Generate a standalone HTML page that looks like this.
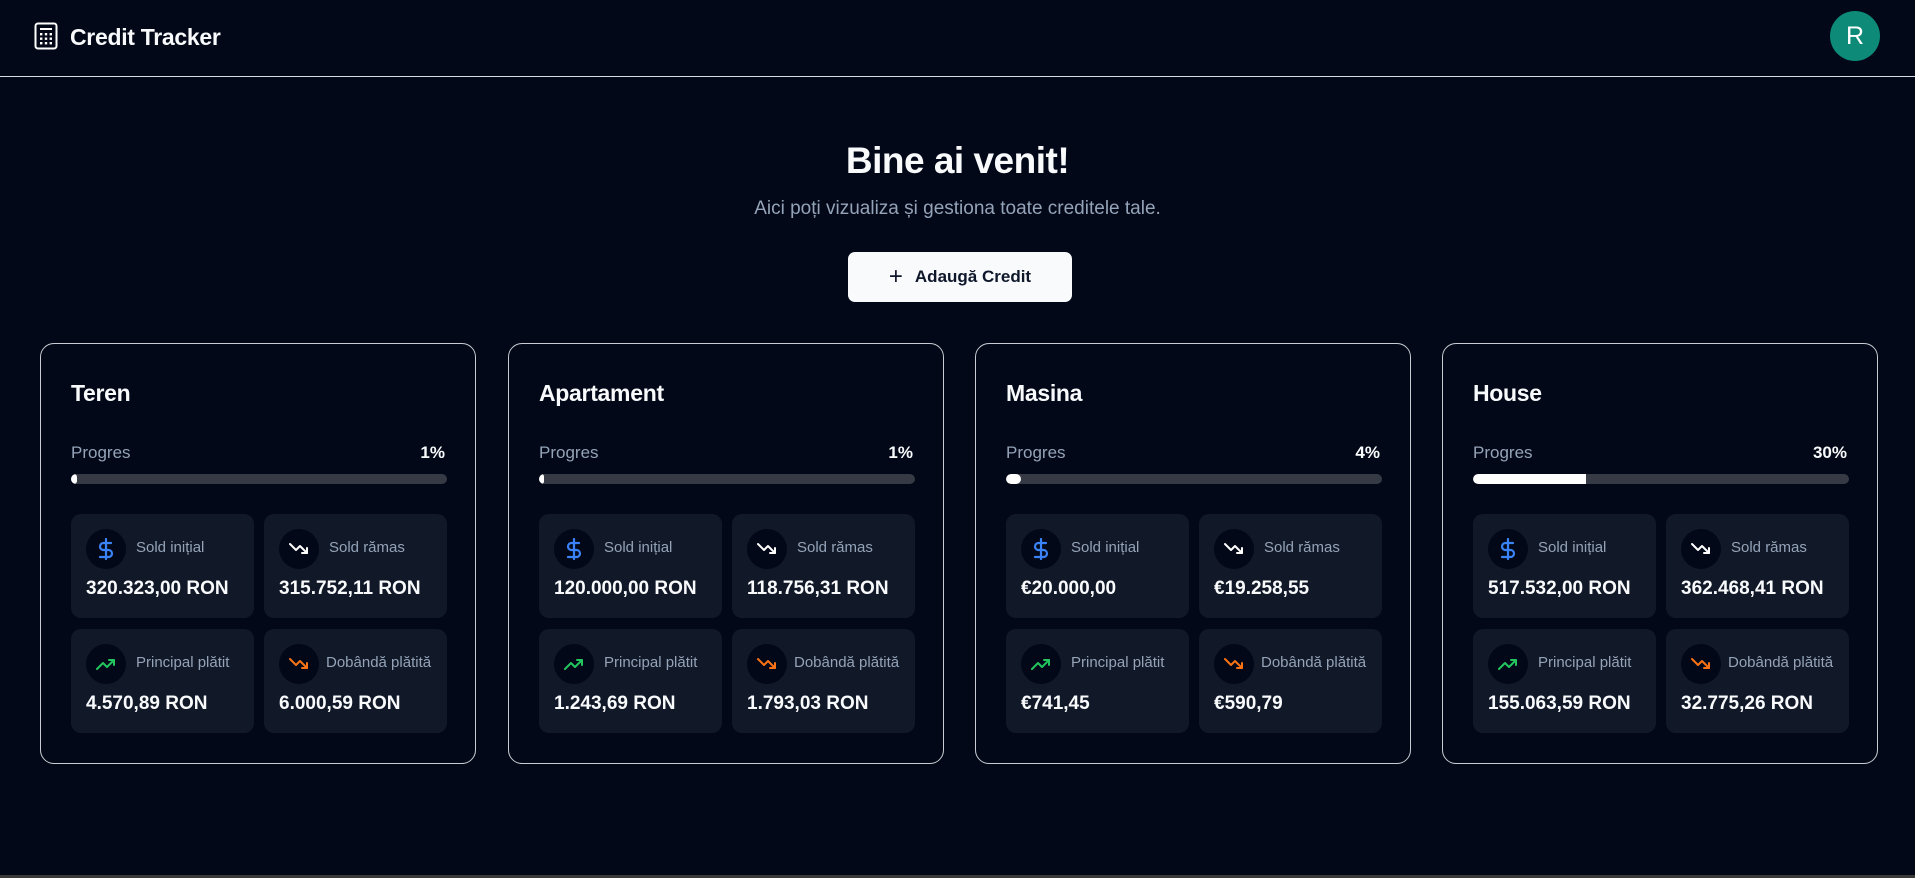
<!DOCTYPE html>
<html><head><meta charset="utf-8"><style>
*{box-sizing:border-box;margin:0;padding:0}
body{width:1915px;height:878px;background:#020817;color:#f8fafc;font-family:"Liberation Sans",sans-serif;position:relative;overflow:hidden}
.hdr{position:absolute;left:0;top:0;width:1915px;height:77px;border-bottom:1px solid #d8dce3}
.logo{position:absolute;left:34px;top:22px}
.brand{position:absolute;left:70px;top:24px;font-size:23px;font-weight:bold;letter-spacing:-0.3px}
.av{position:absolute;left:1830px;top:11px;width:50px;height:50px;border-radius:50%;background:#0d8a78;color:#fff;font-size:25px;text-align:center;line-height:50px}
h1{position:absolute;left:0;width:1915px;top:140px;text-align:center;font-size:37px;font-weight:bold;letter-spacing:-0.5px}
.sub{position:absolute;left:0;width:1915px;top:198px;text-align:center;font-size:19px;color:#94a3b8}
.btn{position:absolute;left:848px;top:252px;width:224px;height:50px;background:#f8fafc;border-radius:7px;color:#0f172a;font-size:17px;font-weight:bold;text-align:center;line-height:50px}
.card{position:absolute;top:343px;width:436px;height:421px;border:1px solid #c9ccd2;border-radius:14px}
.t{position:absolute;left:30px;top:36px;font-size:23px;font-weight:bold;letter-spacing:-0.3px}
.pl{position:absolute;left:30px;top:99px;font-size:17px;color:#94a3b8}
.pp{position:absolute;right:30px;top:99px;font-size:17px;font-weight:bold}
.bar{position:absolute;left:30px;top:130px;width:376px;height:10px;border-radius:5px;background:#363a45;overflow:hidden}
.bar i{display:block;height:100%;background:#fff;border-radius:5px}
.s{position:absolute;width:183px;height:104px;background:#111827;border-radius:10px}
.ic{position:absolute;left:15px;top:15px;width:40px;height:40px;border-radius:50%;background:#020817;display:flex;align-items:center;justify-content:center}
.lb{position:absolute;left:65px;top:25px;font-size:15px;color:#94a3b8;white-space:nowrap}
.v{position:absolute;left:15px;top:64px;font-size:19px;font-weight:bold;white-space:nowrap}
.sb{position:absolute;left:0;top:875px;width:1915px;height:3px;background:#3a3a3a}
</style></head><body>
<div class="hdr">
<svg class="logo" width="24" height="28" viewBox="0 0 24 28" fill="none" stroke="#fff" stroke-width="2"><rect x="1.5" y="1.5" width="21" height="25" rx="2.5"/><line x1="6" y1="7" x2="18" y2="7"/><g fill="#fff" stroke="none"><rect x="6" y="11" width="2.4" height="2.4"/><rect x="10.8" y="11" width="2.4" height="2.4"/><rect x="15.6" y="11" width="2.4" height="2.4"/><rect x="6" y="15.5" width="2.4" height="2.4"/><rect x="10.8" y="15.5" width="2.4" height="2.4"/><rect x="15.6" y="15.5" width="2.4" height="2.4"/><rect x="6" y="20" width="2.4" height="2.4"/><rect x="10.8" y="20" width="2.4" height="2.4"/><rect x="15.6" y="20" width="2.4" height="2.4"/></g></svg>
<div class="brand">Credit Tracker</div>
<div class="av">R</div>
</div>
<h1>Bine ai venit!</h1>
<div class="sub">Aici poți vizualiza și gestiona toate creditele tale.</div>
<div class="btn"><span style="font-weight:normal;font-size:24px;vertical-align:-2px;margin-right:12px">+</span>Adaugă Credit</div>

<!--CARDS-->
<div class="card" style="left:40px"><div class="t">Teren</div><div class="pl">Progres</div><div class="pp">1%</div><div class="bar"><i style="width:1.5%"></i></div>
<div class="s" style="left:30px;top:170px"><div class="ic"><svg width="20" height="22" viewBox="0 0 20 22" fill="none" stroke="#3b82f6" stroke-width="2.2" stroke-linecap="round"><line x1="10" y1="1" x2="10" y2="21"/><path d="M15 5H7.5a3.5 3.5 0 0 0 0 7h5a3.5 3.5 0 0 1 0 7H4"/></svg></div><div class="lb">Sold inițial</div><div class="v">320.323,00 RON</div></div>
<div class="s" style="left:223px;top:170px"><div class="ic"><svg width="20" height="14" viewBox="0 0 20 14" fill="none" stroke="#fff" stroke-width="2" stroke-linecap="round" stroke-linejoin="round"><path d="M1 2l6 6 4-4 7 7"/><path d="M18 6v5h-5"/></svg></div><div class="lb">Sold rămas</div><div class="v">315.752,11 RON</div></div>
<div class="s" style="left:30px;top:285px"><div class="ic"><svg width="20" height="14" viewBox="0 0 20 14" fill="none" stroke="#22c55e" stroke-width="2" stroke-linecap="round" stroke-linejoin="round"><path d="M1 12l6-6 4 4 7-7"/><path d="M13 3h5v5"/></svg></div><div class="lb">Principal plătit</div><div class="v">4.570,89 RON</div></div>
<div class="s" style="left:223px;top:285px"><div class="ic"><svg width="20" height="14" viewBox="0 0 20 14" fill="none" stroke="#f97316" stroke-width="2" stroke-linecap="round" stroke-linejoin="round"><path d="M1 2l6 6 4-4 7 7"/><path d="M18 6v5h-5"/></svg></div><div class="lb" style="left:62px">Dobândă plătită</div><div class="v">6.000,59 RON</div></div>
</div>

<div class="card" style="left:508px"><div class="t">Apartament</div><div class="pl">Progres</div><div class="pp">1%</div><div class="bar"><i style="width:1.2%"></i></div>
<div class="s" style="left:30px;top:170px"><div class="ic"><svg width="20" height="22" viewBox="0 0 20 22" fill="none" stroke="#3b82f6" stroke-width="2.2" stroke-linecap="round"><line x1="10" y1="1" x2="10" y2="21"/><path d="M15 5H7.5a3.5 3.5 0 0 0 0 7h5a3.5 3.5 0 0 1 0 7H4"/></svg></div><div class="lb">Sold inițial</div><div class="v">120.000,00 RON</div></div>
<div class="s" style="left:223px;top:170px"><div class="ic"><svg width="20" height="14" viewBox="0 0 20 14" fill="none" stroke="#fff" stroke-width="2" stroke-linecap="round" stroke-linejoin="round"><path d="M1 2l6 6 4-4 7 7"/><path d="M18 6v5h-5"/></svg></div><div class="lb">Sold rămas</div><div class="v">118.756,31 RON</div></div>
<div class="s" style="left:30px;top:285px"><div class="ic"><svg width="20" height="14" viewBox="0 0 20 14" fill="none" stroke="#22c55e" stroke-width="2" stroke-linecap="round" stroke-linejoin="round"><path d="M1 12l6-6 4 4 7-7"/><path d="M13 3h5v5"/></svg></div><div class="lb">Principal plătit</div><div class="v">1.243,69 RON</div></div>
<div class="s" style="left:223px;top:285px"><div class="ic"><svg width="20" height="14" viewBox="0 0 20 14" fill="none" stroke="#f97316" stroke-width="2" stroke-linecap="round" stroke-linejoin="round"><path d="M1 2l6 6 4-4 7 7"/><path d="M18 6v5h-5"/></svg></div><div class="lb" style="left:62px">Dobândă plătită</div><div class="v">1.793,03 RON</div></div>
</div>

<div class="card" style="left:975px"><div class="t">Masina</div><div class="pl">Progres</div><div class="pp">4%</div><div class="bar"><i style="width:4%"></i></div>
<div class="s" style="left:30px;top:170px"><div class="ic"><svg width="20" height="22" viewBox="0 0 20 22" fill="none" stroke="#3b82f6" stroke-width="2.2" stroke-linecap="round"><line x1="10" y1="1" x2="10" y2="21"/><path d="M15 5H7.5a3.5 3.5 0 0 0 0 7h5a3.5 3.5 0 0 1 0 7H4"/></svg></div><div class="lb">Sold inițial</div><div class="v">€20.000,00</div></div>
<div class="s" style="left:223px;top:170px"><div class="ic"><svg width="20" height="14" viewBox="0 0 20 14" fill="none" stroke="#fff" stroke-width="2" stroke-linecap="round" stroke-linejoin="round"><path d="M1 2l6 6 4-4 7 7"/><path d="M18 6v5h-5"/></svg></div><div class="lb">Sold rămas</div><div class="v">€19.258,55</div></div>
<div class="s" style="left:30px;top:285px"><div class="ic"><svg width="20" height="14" viewBox="0 0 20 14" fill="none" stroke="#22c55e" stroke-width="2" stroke-linecap="round" stroke-linejoin="round"><path d="M1 12l6-6 4 4 7-7"/><path d="M13 3h5v5"/></svg></div><div class="lb">Principal plătit</div><div class="v">€741,45</div></div>
<div class="s" style="left:223px;top:285px"><div class="ic"><svg width="20" height="14" viewBox="0 0 20 14" fill="none" stroke="#f97316" stroke-width="2" stroke-linecap="round" stroke-linejoin="round"><path d="M1 2l6 6 4-4 7 7"/><path d="M18 6v5h-5"/></svg></div><div class="lb" style="left:62px">Dobândă plătită</div><div class="v">€590,79</div></div>
</div>

<div class="card" style="left:1442px"><div class="t">House</div><div class="pl">Progres</div><div class="pp">30%</div><div class="bar"><i style="width:30%;border-radius:5px 0 0 5px"></i></div>
<div class="s" style="left:30px;top:170px"><div class="ic"><svg width="20" height="22" viewBox="0 0 20 22" fill="none" stroke="#3b82f6" stroke-width="2.2" stroke-linecap="round"><line x1="10" y1="1" x2="10" y2="21"/><path d="M15 5H7.5a3.5 3.5 0 0 0 0 7h5a3.5 3.5 0 0 1 0 7H4"/></svg></div><div class="lb">Sold inițial</div><div class="v">517.532,00 RON</div></div>
<div class="s" style="left:223px;top:170px"><div class="ic"><svg width="20" height="14" viewBox="0 0 20 14" fill="none" stroke="#fff" stroke-width="2" stroke-linecap="round" stroke-linejoin="round"><path d="M1 2l6 6 4-4 7 7"/><path d="M18 6v5h-5"/></svg></div><div class="lb">Sold rămas</div><div class="v">362.468,41 RON</div></div>
<div class="s" style="left:30px;top:285px"><div class="ic"><svg width="20" height="14" viewBox="0 0 20 14" fill="none" stroke="#22c55e" stroke-width="2" stroke-linecap="round" stroke-linejoin="round"><path d="M1 12l6-6 4 4 7-7"/><path d="M13 3h5v5"/></svg></div><div class="lb">Principal plătit</div><div class="v">155.063,59 RON</div></div>
<div class="s" style="left:223px;top:285px"><div class="ic"><svg width="20" height="14" viewBox="0 0 20 14" fill="none" stroke="#f97316" stroke-width="2" stroke-linecap="round" stroke-linejoin="round"><path d="M1 2l6 6 4-4 7 7"/><path d="M18 6v5h-5"/></svg></div><div class="lb" style="left:62px">Dobândă plătită</div><div class="v">32.775,26 RON</div></div>
</div>
<div class="sb"></div>
</body></html>
